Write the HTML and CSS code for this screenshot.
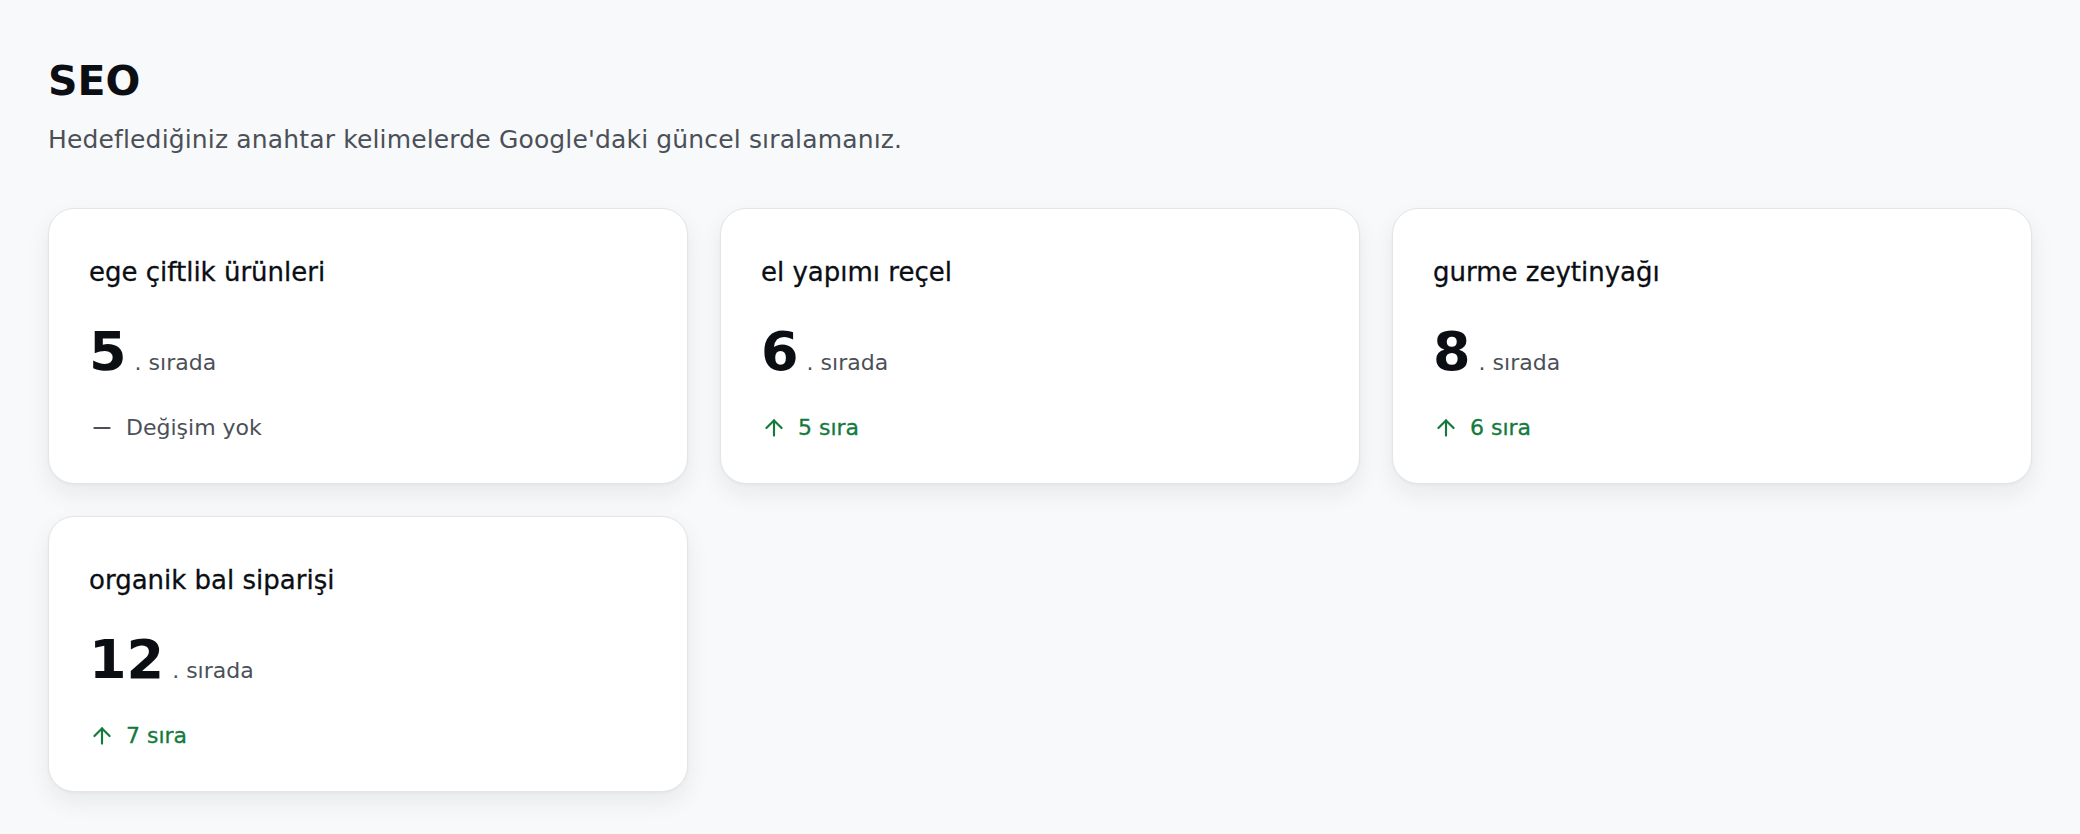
FILE: index.html
```html
<!DOCTYPE html>
<html lang="tr">
<head>
<meta charset="utf-8">
<title>SEO</title>
<link rel="stylesheet" href="styles.css">
</head>
<body>
<main class="page">
  <header class="page-head">
    <h1 class="page-title">SEO</h1>
    <p class="page-sub">Hedeflediğiniz anahtar kelimelerde Google'daki güncel sıralamanız.</p>
  </header>
  <section class="grid">
    <article class="card">
      <h2 class="kw">ege çiftlik ürünleri</h2>
      <div class="rank"><span class="rank-num">5</span><span class="rank-label">. sırada</span></div>
      <div class="change change-flat">
        <svg class="icon" viewBox="0 0 24 24" fill="none" stroke="currentColor" stroke-width="2" stroke-linecap="round" stroke-linejoin="round"><path d="M5 12h14"/></svg>
        <span>Değişim yok</span>
      </div>
    </article>
    <article class="card">
      <h2 class="kw">el yapımı reçel</h2>
      <div class="rank"><span class="rank-num">6</span><span class="rank-label">. sırada</span></div>
      <div class="change change-up">
        <svg class="icon" viewBox="0 0 24 24" fill="none" stroke="currentColor" stroke-width="2" stroke-linecap="round" stroke-linejoin="round"><path d="m5 12 7-7 7 7"/><path d="M12 19V5"/></svg>
        <span>5 sıra</span>
      </div>
    </article>
    <article class="card">
      <h2 class="kw">gurme zeytinyağı</h2>
      <div class="rank"><span class="rank-num">8</span><span class="rank-label">. sırada</span></div>
      <div class="change change-up">
        <svg class="icon" viewBox="0 0 24 24" fill="none" stroke="currentColor" stroke-width="2" stroke-linecap="round" stroke-linejoin="round"><path d="m5 12 7-7 7 7"/><path d="M12 19V5"/></svg>
        <span>6 sıra</span>
      </div>
    </article>
    <article class="card">
      <h2 class="kw">organik bal siparişi</h2>
      <div class="rank"><span class="rank-num">12</span><span class="rank-label">. sırada</span></div>
      <div class="change change-up">
        <svg class="icon" viewBox="0 0 24 24" fill="none" stroke="currentColor" stroke-width="2" stroke-linecap="round" stroke-linejoin="round"><path d="m5 12 7-7 7 7"/><path d="M12 19V5"/></svg>
        <span>7 sıra</span>
      </div>
    </article>
  </section>
</main>
</body>
</html>
```

FILE: styles.css
```css
* { box-sizing: border-box; }

html, body {
  margin: 0;
  padding: 0;
  background: #f8f9fa;
}

body {
  font-family: "DejaVu Sans", "Liberation Sans", sans-serif;
  color: #0b0f14;
}

.page {
  padding: 57px 48px 40px;
}

.page-head {
  display: flex;
  flex-direction: column;
  gap: 18px;
  margin-bottom: 52px;
}

.page-title {
  margin: 0;
  font-size: 41px;
  line-height: 49px;
  font-weight: 700;
  color: #0b0f14;
}

.page-sub {
  margin: 0;
  font-size: 25px;
  line-height: 32px;
  letter-spacing: 0.15px;
  color: #4b5058;
}

.grid {
  display: grid;
  grid-template-columns: repeat(3, 1fr);
  gap: 32px;
}

.card {
  background: #ffffff;
  border: 1px solid #e4e5e8;
  border-radius: 26px;
  padding: 42px 40px 40px;
  box-shadow: 0 10px 24px rgba(20, 24, 32, 0.07), 0 1px 3px rgba(20, 24, 32, 0.04);
  display: flex;
  flex-direction: column;
}

.kw {
  margin: 0;
  font-size: 26px;
  line-height: 42px;
  font-weight: 400;
  color: #0b0f14;
  -webkit-text-stroke: 0.3px currentColor;
}

.rank {
  display: flex;
  align-items: baseline;
  gap: 8px;
  margin-top: 32px;
}

.rank-num {
  font-size: 54px;
  line-height: 54px;
  font-weight: 700;
  color: #0b0f14;
}

.rank-label {
  font-size: 22px;
  line-height: 30px;
  color: #4b5058;
}

.change {
  display: flex;
  align-items: center;
  gap: 11px;
  margin-top: 34px;
  font-size: 22px;
  line-height: 30px;
}

.change .icon {
  width: 26px;
  height: 26px;
  flex: none;
}

.change-flat {
  color: #4b5058;
}

.change-up {
  color: #137a3c;
  -webkit-text-stroke: 0.3px currentColor;
}
```
